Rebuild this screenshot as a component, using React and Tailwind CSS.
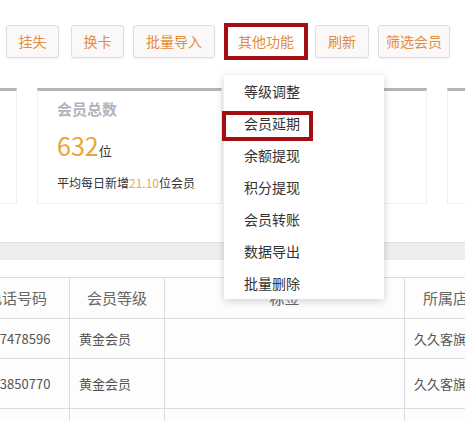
import React from 'react';

const buttons = [
  { label: '挂失', w: 'w-[53px]', ml: 'ml-0' },
  { label: '换卡', w: 'w-[53px]', ml: 'ml-[12px]' },
  { label: '批量导入', w: 'w-[82px]', ml: 'ml-[9px]' },
];

const menuItems = ['等级调整', '会员延期', '余额提现', '积分提现', '会员转账', '数据导出', '批量删除'];

const rows = [
  { phone: '13957478596', level: '黄金会员', store: '久久客旗舰店', h: 'h-[40px]' },
  { phone: '13863850770', level: '黄金会员', store: '久久客旗舰店', h: 'h-[50px]' },
  { phone: '', level: '', store: '', h: 'h-[40px]' },
];

const Btn = ({ label, className = '' }) => (
  <button className={`h-[33px] rounded-[3px] border border-[#dedede] bg-[#faf8f8] text-[14px] text-[#e38d3f] shadow-[0_1px_2px_rgba(0,0,0,0.06)] ${className}`}>
    {label}
  </button>
);

const StatCard = ({ children }) => (
  <div className="w-[185px] h-[116px] shrink-0 border-t-[3px] border-t-[#b4b4bc] border-x border-b border-[#efefef] bg-white px-[19px] pt-[9px]">
    {children}
  </div>
);

export default function App() {
  return (
    <div className="relative w-[465px] h-[421px] overflow-hidden bg-white font-['Noto_Sans_CJK_SC',sans-serif]">
      {/* toolbar */}
      <div className="flex items-center h-[37px] mt-[23px] pl-[6px]">
        {buttons.map((b) => (
          <Btn key={b.label} label={b.label} className={`${b.w} ${b.ml}`} />
        ))}
        <div className="ml-[9px] w-[84px] h-[37px] border-4 border-[#a30e12] bg-white flex items-center justify-center">
          <span className="text-[14px] text-[#e38d3f]">其他功能</span>
        </div>
        <Btn label="刷新" className="w-[54px] ml-[7px]" />
        <Btn label="筛选会员" className="w-[72px] ml-[9px]" />
      </div>

      {/* stat cards */}
      <div className="flex gap-[20px] -ml-[168px] mt-[28px]">
        <StatCard />
        <StatCard>
          <div className="text-[15px] leading-[18px] font-bold text-[#b3b3bb]">会员总数</div>
          <div className="mt-[12px] leading-[30px] text-[#eaa537]">
            <span className="text-[25px]">632</span>
            <span className="text-[13px] text-[#333]">位</span>
          </div>
          <div className="mt-[9px] text-[12px] leading-[16px] text-[#333]">
            平均每日新增<span className="text-[#eaaa45]">21.10</span>位会员
          </div>
        </StatCard>
        <StatCard />
        <StatCard />
      </div>

      {/* gray band */}
      <div className="mt-[38px] h-[18px] bg-[#eeeeee] border-t border-[#e2e2e2]" />

      {/* table */}
      <div className="mt-[17px] -ml-[35px] w-[560px] border-t border-[#dcdcdc] bg-[#fdfdfd]">
        <div className="grid grid-cols-[105px_95px_240px_120px] h-[41px] border-b border-[#dcdcdc] text-[15px] text-[#666]">
          <div className="flex items-center justify-center border-r border-[#dcdcdc]">电话号码</div>
          <div className="flex items-center justify-center border-r border-[#dcdcdc]">会员等级</div>
          <div className="flex items-center justify-center border-r border-[#dcdcdc]">标签</div>
          <div className="flex items-center pl-[18px]">所属店铺</div>
        </div>
        {rows.map((r, i) => (
          <div key={i} className={`grid grid-cols-[105px_95px_240px_120px] ${r.h} border-b border-[#dcdcdc] text-[13px] text-[#555]`}>
            <div className="flex items-center pl-[6px] border-r border-[#dcdcdc]">{r.phone}</div>
            <div className="flex items-center pl-[9px] border-r border-[#dcdcdc]">{r.level}</div>
            <div className="border-r border-[#dcdcdc]" />
            <div className="flex items-center pl-[9px]">{r.store}</div>
          </div>
        ))}
      </div>

      {/* dropdown menu */}
      <div className="absolute left-[224px] top-[75px] w-[160px] bg-white rounded-[2px] shadow-[0_2px_8px_rgba(0,0,0,0.18)]">
        {menuItems.map((m) => (
          <div key={m} className="h-[32px] flex items-center pl-[20px] text-[14px] text-[#333]">
            {m}
          </div>
        ))}
        <div className="absolute left-[-2px] top-[36px] w-[91px] h-[30px] border-4 border-[#a30e12]" />
      </div>
    </div>
  );
}
